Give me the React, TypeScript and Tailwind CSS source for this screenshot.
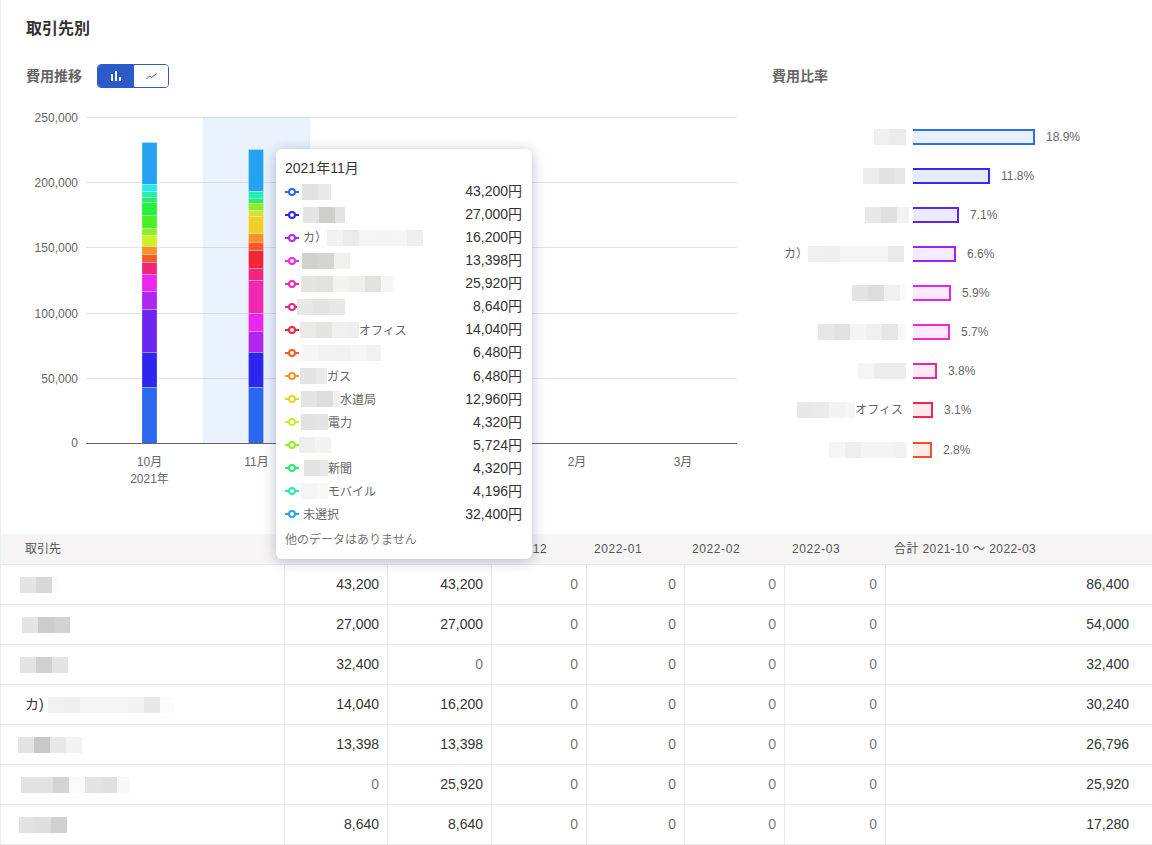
import React from "react"

const ticks = [
  { y: 117.5, label: "250,000" },
  { y: 182.5, label: "200,000" },
  { y: 247.5, label: "150,000" },
  { y: 313.5, label: "100,000" },
  { y: 378.5, label: "50,000" },
]

// [top, bottom, colour] from the top of the stack down
const octBar: [number, number, string][] = [
  [142, 184, "#26a3f0"],
  [184, 191, "#26e6f0"],
  [191, 197, "#26ecb0"],
  [197, 202, "#26ec70"],
  [202, 215, "#26f03c"],
  [215, 228, "#48f026"],
  [228, 235, "#90ee26"],
  [235, 246, "#cdf026"],
  [246, 254, "#f29428"],
  [254, 262, "#f45a26"],
  [262, 274, "#f0267c"],
  [274, 291, "#ec26ee"],
  [291, 309, "#b026ee"],
  [309, 352, "#6c26f0"],
  [352, 387, "#2d26ee"],
  [387, 443, "#2b68f0"],
]

const novBar: [number, number, string][] = [
  [149, 191, "#26a3f0"],
  [191, 198, "#26ecb0"],
  [198, 203, "#26ec70"],
  [203, 210, "#90ee26"],
  [210, 216, "#cde82c"],
  [216, 233, "#f0d026"],
  [233, 242, "#f29428"],
  [242, 250, "#f45a26"],
  [250, 268, "#f02638"],
  [268, 280, "#f0267c"],
  [280, 313, "#f028b0"],
  [313, 331, "#ec26ee"],
  [331, 352, "#b026ee"],
  [352, 387, "#2d26ee"],
  [387, 443, "#2b68f0"],
]

const tipRows = [
  { color: "text-[#2b68f0]", offset: "ml-[3px]", cells: ["w-4 bg-[#e2e2e1]", "w-[13px] bg-[#e9e9e8]"], suffix: "", value: "43,200円" },
  { color: "text-[#2d26ee]", offset: "ml-1", cells: ["w-4 bg-[#e4e4e3]", "w-4 bg-[#cfcecd]", "w-[10px] bg-[#e4e4e3]"], suffix: "", value: "27,000円" },
  { color: "text-[#b026ee]", offset: "ml-1", prefix: "カ）", cells: ["w-4 bg-[#f2f2f1]", "w-4 bg-[#ecebea]", "w-4 bg-[#f5f5f4]", "w-4 bg-[#f4f4f3]", "w-4 bg-[#f5f5f4]", "w-4 bg-[#eeeeed]"], suffix: "", value: "16,200円" },
  { color: "text-[#ec26ee]", offset: "ml-[3px]", cells: ["w-4 bg-[#d2d1d0]", "w-4 bg-[#d5d4d3]", "w-4 bg-[#f0f0ef]"], suffix: "", value: "13,398円" },
  { color: "text-[#f028b0]", offset: "ml-[2px]", cells: ["w-4 bg-[#e4e4e3]", "w-4 bg-[#e2e2e1]", "w-4 bg-[#f2f2f1]", "w-4 bg-[#eeeeed]", "w-4 bg-[#e2e2e1]", "w-3 bg-[#f6f6f5]"], suffix: "", value: "25,920円" },
  { color: "text-[#f0267c]", offset: "-ml-[2px]", cells: ["w-4 bg-[#e8e8e7]", "w-4 bg-[#e4e4e3]", "w-4 bg-[#e8e8e7]"], suffix: "", value: "8,640円" },
  { color: "text-[#f02638]", offset: "ml-px", cells: ["w-4 bg-[#eaeae9]", "w-4 bg-[#e4e4e3]", "w-4 bg-[#f0f0ef]", "w-[11px] bg-[#eeeeed]"], suffix: "オフィス", value: "14,040円" },
  { color: "text-[#f45a26]", offset: "ml-1", cells: ["w-4 bg-[#f6f6f5]", "w-4 bg-[#f3f3f2]", "w-4 bg-[#f2f2f1]", "w-4 bg-[#f5f5f4]", "w-[14px] bg-[#f2f2f1]"], suffix: "", value: "6,480円" },
  { color: "text-[#f29428]", offset: "ml-px", cells: ["w-4 bg-[#e4e4e3]", "w-[11px] bg-[#e9e9e8]"], suffix: "ガス", value: "6,480円" },
  { color: "text-[#f0d026]", offset: "ml-[2px]", cells: ["w-4 bg-[#e4e4e3]", "w-4 bg-[#dedddc]", "w-[7px] bg-[#f0f0ef]"], suffix: "水道局", value: "12,960円" },
  { color: "text-[#cdf026]", offset: "ml-[2px]", cells: ["w-4 bg-[#e2e2e1]", "w-[11px] bg-[#e4e4e3]"], suffix: "電力", value: "4,320円" },
  { color: "text-[#90ee26]", offset: "ml-0", cells: ["w-4 bg-[#eeeeed]", "w-4 bg-[#f3f3f2]"], suffix: "", value: "5,724円" },
  { color: "text-[#26ec70]", offset: "ml-[5px]", cells: ["w-4 bg-[#e4e4e3]", "w-2 bg-[#e9e9e8]"], suffix: "新聞", value: "4,320円" },
  { color: "text-[#26ecb0]", offset: "ml-[2px]", cells: ["w-4 bg-[#f5f5f4]", "w-[11px] bg-[#f8f8f7]"], suffix: "モバイル", value: "4,196円" },
  { color: "text-[#26a3f0]", offset: "ml-1", cells: [], suffix: "未選択", value: "32,400円" },
]

const ratioRows = [
  { end: "mr-[7px]", cells: ["w-4 bg-[#f0f0f0]", "w-4 bg-[#ebebeb]"], bar: "w-[122px] border-[#2b6ef0] bg-[#eaf1fe]", pct: "18.9%" },
  { end: "mr-[8px]", cells: ["w-4 bg-[#ececec]", "w-4 bg-[#e2e2e2]", "w-[10px] bg-[#e6e6e6]"], bar: "w-[77px] border-[#2d2df0] bg-[#eaeafe]", pct: "11.8%" },
  { end: "mr-[4px]", cells: ["w-4 bg-[#e8e8e8]", "w-4 bg-[#e0e0e0]", "w-3 bg-[#f2f2f2]"], bar: "w-[46px] border-[#5a26f0] bg-[#eeeafe]", pct: "7.1%" },
  { end: "mr-[9px]", prefix: "カ）", cells: ["w-4 bg-[#f0f0f0]", "w-4 bg-[#eeeeee]", "w-4 bg-[#f5f5f5]", "w-4 bg-[#f5f5f5]", "w-4 bg-[#f5f5f5]", "w-4 bg-[#eaeaea]"], bar: "w-[43px] border-[#9a26f0] bg-[#f6eafe]", pct: "6.6%" },
  { end: "mr-[6px]", cells: ["w-4 bg-[#e4e4e4]", "w-4 bg-[#dddddd]", "w-4 bg-[#f0f0f0]", "w-[7px] bg-[#fafafa]"], bar: "w-[38px] border-[#e026ee] bg-[#fbeafe]", pct: "5.9%" },
  { end: "mr-[8px]", cells: ["w-4 bg-[#e6e6e6]", "w-4 bg-[#e2e2e2]", "w-4 bg-[#f4f4f4]", "w-4 bg-[#f0f0f0]", "w-4 bg-[#e6e6e6]", "w-[7px] bg-[#f6f6f6]"], bar: "w-[37px] border-[#f028d8] bg-[#feeafb]", pct: "5.7%" },
  { end: "mr-[7px]", cells: ["w-4 bg-[#f5f5f5]", "w-4 bg-[#ececec]", "w-4 bg-[#ececec]"], bar: "w-[24px] border-[#f0288c] bg-[#feeaf4]", pct: "3.8%" },
  { end: "mr-[10px]", cells: ["w-4 bg-[#e8e8e8]", "w-4 bg-[#eaeaea]", "w-4 bg-[#f3f3f3]", "w-[10px] bg-[#f6f6f6]"], suffix: "オフィス", bar: "w-[20px] border-[#f02850] bg-[#feeaee]", pct: "3.1%" },
  { end: "mr-[6px]", cells: ["w-4 bg-[#f5f5f5]", "w-4 bg-[#eeeeee]", "w-4 bg-[#f4f4f4]", "w-4 bg-[#f4f4f4]", "w-[14px] bg-[#f2f2f2]"], bar: "w-[19px] border-[#f4502c] bg-[#feeeea]", pct: "2.8%", push: "mt-px" },
]

// the first two month headers sit behind the tooltip in this view
const headers = ["", "", "2021-12", "2022-01", "2022-02", "2022-03"]

const tableRows = [
  { pad: "pl-[19px]", cells: ["w-4 bg-[#e4e4e4]", "w-4 bg-[#d8d8d8]", "w-[5px] bg-[#fafafa]"], values: ["43,200", "43,200", "0", "0", "0", "0"], total: "86,400" },
  { pad: "pl-[21px]", cells: ["w-4 bg-[#e4e4e4]", "w-4 bg-[#cccccc]", "w-4 bg-[#d2d2d2]"], values: ["27,000", "27,000", "0", "0", "0", "0"], total: "54,000" },
  { pad: "pl-[19px]", cells: ["w-4 bg-[#e4e4e4]", "w-4 bg-[#d0d0d0]", "w-4 bg-[#e4e4e4]"], values: ["32,400", "0", "0", "0", "0", "0"], total: "32,400" },
  { pad: "pl-[24px]", prefix: "カ)", cells: ["w-4 bg-[#f2f2f2]", "w-4 bg-[#eeeeee]", "w-4 bg-[#f5f5f5]", "w-4 bg-[#f5f5f5]", "w-4 bg-[#f5f5f5]", "w-4 bg-[#f3f3f3]", "w-4 bg-[#e8e8e8]", "w-[14px] bg-[#fbfbfb]"], values: ["14,040", "16,200", "0", "0", "0", "0"], total: "30,240" },
  { pad: "pl-[17px]", cells: ["w-4 bg-[#e4e4e4]", "w-4 bg-[#c8c8c8]", "w-4 bg-[#e8e8e8]", "w-4 bg-[#f3f3f3]"], values: ["13,398", "13,398", "0", "0", "0", "0"], total: "26,796" },
  { pad: "pl-[20px]", cells: ["w-4 bg-[#e2e2e2]", "w-4 bg-[#e2e2e2]", "w-4 bg-[#d4d4d4]", "w-4 bg-[#fafafa]", "w-4 bg-[#e4e4e4]", "w-4 bg-[#e0e0e0]", "w-[13px] bg-[#f8f8f8]"], values: ["0", "25,920", "0", "0", "0", "0"], total: "25,920" },
  { pad: "pl-[18px]", cells: ["w-4 bg-[#e2e2e2]", "w-4 bg-[#dedede]", "w-4 bg-[#d0d0d0]"], values: ["8,640", "8,640", "0", "0", "0", "0"], total: "17,280" },
]

function Blur({ cells }: { cells: string[] }) {
  return (
    <span className="flex h-4 shrink-0">
      {cells.map((c, i) => (
        <span key={i} className={`h-4 ${c}`} />
      ))}
    </span>
  )
}

function Marker({ color }: { color: string }) {
  return (
    <svg width="14" height="8" viewBox="0 0 14 8" className={`shrink-0 ${color}`}>
      <line x1="0" y1="4" x2="14" y2="4" stroke="currentColor" strokeWidth="2" />
      <circle cx="7" cy="4" r="3" fill="#fff" stroke="currentColor" strokeWidth="2" />
    </svg>
  )
}

function StackedBar({ x, segments }: { x: number; segments: [number, number, string][] }) {
  return (
    <g>
      {segments.map(([top, bottom, color]) => (
        <rect
          key={top}
          x={x + 0.5}
          y={top + 0.5}
          width="15"
          height={bottom - top}
          fill={color}
          stroke="#fff"
          strokeOpacity="0.25"
        />
      ))}
    </g>
  )
}

function TrendChart() {
  return (
    <svg width="769" height="446" viewBox="1 88 769 446" className="block text-[12px]">
      {ticks.map((t) => (
        <g key={t.label}>
          <line x1="86" x2="737" y1={t.y} y2={t.y} stroke="#e2e4e8" />
          <text x="78" y={t.y + 4} textAnchor="end" fill="#666">
            {t.label}
          </text>
        </g>
      ))}
      <text x="78" y="447" textAnchor="end" fill="#666">
        0
      </text>
      <rect x="203" y="117" width="107" height="326" fill="#2b80f0" fillOpacity="0.1" />
      <StackedBar x={141.5} segments={octBar} />
      <StackedBar x={248} segments={novBar} />
      <line x1="86" x2="737" y1="443.5" y2="443.5" stroke="#666" />
      <text x="149.5" y="466" textAnchor="middle" fill="#666">
        10月
      </text>
      <text x="149.5" y="483" textAnchor="middle" fill="#666">
        2021年
      </text>
      <text x="256.5" y="466" textAnchor="middle" fill="#666">
        11月
      </text>
      <text x="577" y="466" textAnchor="middle" fill="#666">
        2月
      </text>
      <text x="683" y="466" textAnchor="middle" fill="#666">
        3月
      </text>
    </svg>
  )
}

export default function App() {
  return (
    <div className="relative h-[845px] overflow-hidden border-l border-[#e4eefc] bg-white text-[14px] text-[#333] [font-family:'Liberation_Sans','Noto_Sans_CJK_JP',sans-serif]">
      <div className="flex h-[58px] items-center pl-[25px] text-[16px] font-bold">取引先別</div>

      <div className="flex h-[476px]">
        <div className="w-[769px]">
          <div className="flex h-[30px] items-start pl-[25px] pt-[6px]">
            <span className="flex h-6 items-center text-[14px] font-bold text-[#666]">費用推移</span>
            <div className="ml-[15px] flex h-6 w-[72px] overflow-hidden rounded border border-[#2a5bc8]">
              <button className="flex w-9 items-center justify-center bg-[#2a5bc8]">
                <svg width="11" height="10" viewBox="0 0 11 10" fill="#fff">
                  <rect x="0" y="3" width="2" height="7" />
                  <rect x="4" y="0" width="2" height="10" />
                  <rect x="8" y="6" width="2" height="4" />
                </svg>
              </button>
              <button className="flex flex-1 items-center justify-center bg-white">
                <svg width="11" height="7" viewBox="0 0 11 7" fill="none" stroke="#2a5bc8" strokeWidth="1">
                  <path d="M0.5 6 L3.5 3 L5.5 4.5 L10.5 0.8" />
                </svg>
              </button>
            </div>
          </div>
          <TrendChart />
        </div>

        <div className="flex-1">
          <div className="flex h-[30px] items-start pl-[2px] pt-[6px]">
            <span className="flex h-6 items-center text-[14px] font-bold text-[#666]">費用比率</span>
          </div>
          <div className="pt-[29px]">
            {ratioRows.map((r) => (
              <div key={r.pct} className={`flex h-[39.1px] items-center ${r.push ?? ""}`}>
                <div className="flex w-[143px] shrink-0 justify-end">
                  <div className={`flex items-center text-[12px] text-[#666] ${r.end}`}>
                    {r.prefix && <span>{r.prefix}</span>}
                    <Blur cells={r.cells} />
                    {r.suffix && <span>{r.suffix}</span>}
                  </div>
                </div>
                <div className={`h-4 border-y-2 border-r-2 ${r.bar}`} />
                <span className="ml-[11px] text-[12px] text-[#666]">{r.pct}</span>
              </div>
            ))}
          </div>
        </div>
      </div>

      <table className="w-full table-fixed border-separate border-spacing-0">
        <colgroup>
          <col className="w-[284px]" />
          <col className="w-[103px]" />
          <col className="w-[104px]" />
          <col className="w-[95px]" />
          <col className="w-[98px]" />
          <col className="w-[100px]" />
          <col className="w-[101px]" />
          <col />
        </colgroup>
        <thead>
          <tr className="h-[31px] bg-[#f6f4f5] text-left text-[12px] font-normal text-[#555]">
            <th className="border-b border-[#e8e8e8] pl-[24px] font-normal">取引先</th>
            {headers.map((h, i) => (
              <th key={i} className="border-b border-[#e8e8e8] pl-[7px] font-normal tracking-[0.6px]">
                {h}
              </th>
            ))}
            <th className="border-b border-[#e8e8e8] pl-2 font-normal tracking-[0.4px]">合計 2021-10 〜 2022-03</th>
          </tr>
        </thead>
        <tbody>
          {tableRows.map((row) => (
            <tr key={row.total} className="h-10">
              <td className={`border-r border-b border-[#e8e8e8] ${row.pad}`}>
                <div className="flex items-center">
                  {row.prefix && <span className="mr-1">{row.prefix}</span>}
                  <Blur cells={row.cells} />
                </div>
              </td>
              {row.values.map((v, i) => (
                <td
                  key={i}
                  className={`border-r border-b border-[#e8e8e8] pr-2 text-right ${v === "0" ? "text-[#777]" : "text-[#333]"}`}
                >
                  {v}
                </td>
              ))}
              <td className="border-b border-[#e8e8e8] pr-[23px] text-right">{row.total}</td>
            </tr>
          ))}
        </tbody>
      </table>

      {/* hover tooltip for 2021-11 */}
      <div className="absolute left-[275px] top-[149px] z-10 h-[410px] w-[256px] rounded-md bg-white pl-[9px] pr-[10px] pt-[8px] shadow-[0_2px_14px_rgba(20,30,80,0.28)]">
        <div className="flex h-[22px] items-center">2021年11月</div>
        <div className="mt-[1px]">
          {tipRows.map((r) => (
            <div key={r.value + r.color} className="flex h-[23.07px] items-center justify-between">
              <div className="flex items-center">
                <Marker color={r.color} />
                <div className={`flex items-center text-[12px] text-[#666] ${r.offset}`}>
                  {r.prefix && <span>{r.prefix}</span>}
                  <Blur cells={r.cells} />
                  {r.suffix && <span className="pt-[2px]">{r.suffix}</span>}
                </div>
              </div>
              <span>{r.value}</span>
            </div>
          ))}
        </div>
        <div className="mt-[5px] text-[12px] text-[#777]">他のデータはありません</div>
      </div>
    </div>
  )
}
